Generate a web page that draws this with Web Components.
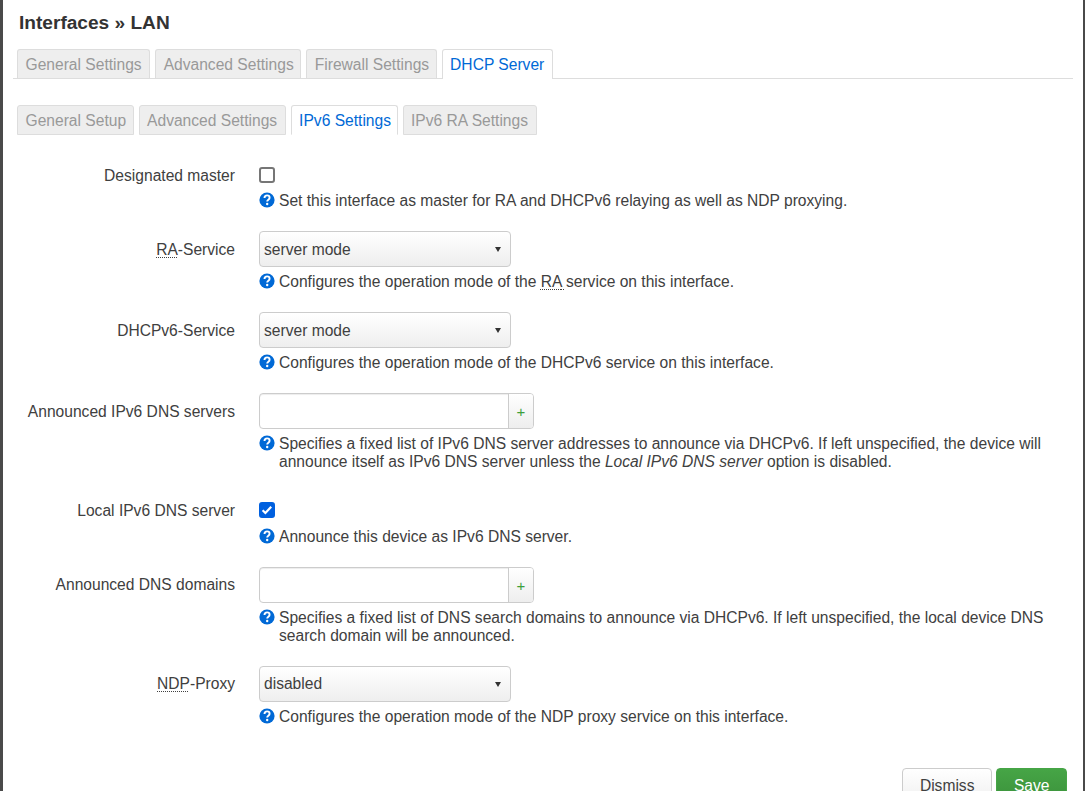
<!DOCTYPE html>
<html>
<head>
<meta charset="utf-8">
<style>
  html, body { margin: 0; height: 100%; overflow: hidden; background: #4a4a4a; }
  body { font-family: "Liberation Sans", Arial, sans-serif; }
</style>
</head>
<body>
<luci-modal>
  <h4 slot="title">Interfaces » LAN</h4>

  <luci-tabs slot="tabs" active="DHCP Server" tabs="General Settings|Advanced Settings|Firewall Settings|DHCP Server" line></luci-tabs>
  <luci-tabs slot="tabs" active="IPv6 Settings" tabs="General Setup|Advanced Settings|IPv6 Settings|IPv6 RA Settings" sub></luci-tabs>

  <luci-row label="Designated master" check style="--label-top: 2px">
    <luci-check style="margin-top: 1px"></luci-check>
    <span slot="desc">Set this interface as master for RA and DHCPv6 relaying as well as NDP proxying.</span>
  </luci-row>

  <luci-row label="RA-Service" abbr="RA">
    <luci-select value="server mode"></luci-select>
    <span slot="desc">Configures the operation mode of the <luci-abbr>RA</luci-abbr> service on this interface.</span>
  </luci-row>

  <luci-row label="DHCPv6-Service">
    <luci-select value="server mode"></luci-select>
    <span slot="desc">Configures the operation mode of the DHCPv6 service on this interface.</span>
  </luci-row>

  <luci-row label="Announced IPv6 DNS servers">
    <luci-list></luci-list>
    <span slot="desc">Specifies a fixed list of IPv6 DNS server addresses to announce via DHCPv6. If left unspecified, the device will announce itself as IPv6 DNS server unless the <em>Local IPv6 DNS server</em> option is disabled.</span>
  </luci-row>

  <luci-row label="Local IPv6 DNS server" check>
    <luci-check checked></luci-check>
    <span slot="desc">Announce this device as IPv6 DNS server.</span>
  </luci-row>

  <luci-row label="Announced DNS domains" style="--label-top: 0px">
    <luci-list></luci-list>
    <span slot="desc">Specifies a fixed list of DNS search domains to announce via DHCPv6. If left unspecified, the local device DNS search domain will be announced.</span>
  </luci-row>

  <luci-row label="NDP-Proxy" abbr="NDP" style="--label-top: 0px; --value-top: 0px">
    <luci-select value="disabled"></luci-select>
    <span slot="desc">Configures the operation mode of the NDP proxy service on this interface.</span>
  </luci-row>

  <luci-button slot="footer">Dismiss</luci-button>
  <luci-button slot="footer" save>Save</luci-button>
</luci-modal>

<script>
class LuciModal extends HTMLElement {
  constructor() {
    super();
    this.attachShadow({ mode: 'open' });
    this.shadowRoot.innerHTML = `
      <style>
        :host {
          display: block;
          margin: 0 2px 0 3px;
          height: 791px;
          overflow: hidden;
          background: #fff;
          color: #404040;
          font-size: 15.6px;
          padding: 11px 10px 0 10px;
          box-sizing: border-box;
        }
        ::slotted(h4) {
          margin: 0 0 15px 6px;
          font-size: 19.1px;
          line-height: 23px;
          font-weight: bold;
          color: #333;
        }
        .footer {
          display: flex;
          justify-content: flex-end;
          gap: 4px;
          margin-top: 43px;
          padding-right: 6px;
        }
      </style>
      <slot name="title"></slot>
      <slot name="tabs"></slot>
      <slot></slot>
      <div class="footer"><slot name="footer"></slot></div>
    `;
  }
}

class LuciTabs extends HTMLElement {
  constructor() {
    super();
    this.attachShadow({ mode: 'open' });
  }

  connectedCallback() {
    const active = this.getAttribute('active');
    const tabs = this.getAttribute('tabs').split('|');
    this.shadowRoot.innerHTML = `
      <style>
        :host { display: block; margin-bottom: 21px; }
        :host([line]) { margin-bottom: 26px; }
        ul {
          display: flex;
          gap: 5px;
          list-style: none;
          margin: 0;
          padding: 0 0 0 4px;
        }
        :host([line]) ul { border-bottom: 1px solid #ddd; }
        li {
          height: 28px;
          line-height: 29px;
          padding: 0 7.5px 0 7.5px;
          color: #999;
          background: #eee;
          border: 1px solid #ddd;
          border-bottom: 0;
          border-radius: 3px 3px 0 0;
          white-space: nowrap;
        }
        :host([line]) li { margin-bottom: -1px; }
        :host([line]) li:nth-child(2),
        :host([line]) li:nth-child(3),
        :host([sub]) li:first-child { padding-right: 6.5px; }
        :host([sub]) li:nth-child(3) { padding-right: 5.5px; }
        :host([sub]) li { border-bottom: 1px solid #ddd; height: 28px; }
        li.on { color: #0069d6; background: #fff; }
        :host([line]) li.on { padding-bottom: 1px; margin-bottom: -1px; }
        :host([sub]) li.on { border-bottom-color: #fff; }
      </style>
      <ul>${tabs.map(t => `<li class="${t === active ? 'on' : ''}">${t}</li>`).join('')}</ul>
    `;
  }
}

class LuciRow extends HTMLElement {
  constructor() {
    super();
    this.attachShadow({ mode: 'open' });
  }

  connectedCallback() {
    let label = this.getAttribute('label');
    const abbr = this.getAttribute('abbr');
    if (abbr) label = label.replace(abbr, `<u>${abbr}</u>`);
    this.shadowRoot.innerHTML = `
      <style>
        :host {
          display: grid;
          grid-template-columns: 222px 1fr;
          column-gap: 24px;
          margin-bottom: 22px;
        }
        .label {
          text-align: right;
          padding-top: var(--label-top, 1px);
          line-height: 36px;
          white-space: nowrap;
        }
        u {
          text-decoration: underline dotted 1px;
          text-underline-offset: 2px;
        }
        .control { height: 36px; }
        :host([check]) .control { height: 30px; padding-top: 10px; box-sizing: border-box; }
        .desc {
          display: flex;
          gap: 4px;
          margin: 5px 0 -1px;
          padding-top: 1px;
          line-height: 18px;
          max-width: 790px;
        }
        svg { flex: none; width: 16px; height: 16px; }
      </style>
      <div class="label">${label}</div>
      <div>
        <div class="control"><slot></slot></div>
        <div class="desc">
          <svg viewBox="0 0 16 16"><circle cx="8" cy="8" r="7.6" fill="#0069d6"/><path d="M5.5 6c0-1.6 1.1-2.6 2.6-2.6s2.5.9 2.5 2.3c0 1.9-2.4 2-2.4 3.7" fill="none" stroke="#fff" stroke-width="1.9"/><circle cx="8.2" cy="12" r="1.2" fill="#fff"/></svg>
          <div><slot name="desc"></slot></div>
        </div>
      </div>
    `;
  }
}

class LuciCheck extends HTMLElement {
  constructor() {
    super();
    this.attachShadow({ mode: 'open' });
  }

  connectedCallback() {
    this.shadowRoot.innerHTML = `
      <style>
        :host {
          display: block;
          width: 16px;
          height: 16px;
          box-sizing: border-box;
          border: 2px solid #767676;
          border-radius: 3px;
          background: #fff;
        }
        :host([checked]) { background: #0060df; border-color: #0060df; }
        svg { display: block; width: 12px; height: 12px; }
      </style>
      ${this.hasAttribute('checked') ? '<svg viewBox="0 0 12 12"><path d="M1.6 6.2l2.8 2.8 5.8-6.2" fill="none" stroke="#fff" stroke-width="2.2"/></svg>' : ''}
    `;
  }
}

class LuciSelect extends HTMLElement {
  constructor() {
    super();
    this.attachShadow({ mode: 'open' });
  }

  connectedCallback() {
    this.shadowRoot.innerHTML = `
      <style>
        :host {
          display: flex;
          align-items: center;
          justify-content: space-between;
          width: 252px;
          height: 36px;
          box-sizing: border-box;
          padding: 0 9px 0 4px;
          border: 1px solid #ccc;
          border-radius: 4px;
          background: linear-gradient(#fff, #eee);
        }
        span { padding-top: var(--value-top, 2px); }
        i {
          width: 0;
          height: 0;
          border-left: 3px solid transparent;
          border-right: 3px solid transparent;
          border-top: 5px solid #333;
        }
      </style>
      <span>${this.getAttribute('value')}</span><i></i>
    `;
  }
}

class LuciList extends HTMLElement {
  constructor() {
    super();
    this.attachShadow({ mode: 'open' });
    this.shadowRoot.innerHTML = `
      <style>
        :host {
          display: flex;
          width: 275px;
          height: 36px;
          box-sizing: border-box;
          border: 1px solid #ccc;
          border-radius: 4px;
          box-shadow: inset 0 1px 1px rgba(0,0,0,.075);
          background: #fff;
        }
        div { flex: 1; }
        button {
          width: 25px;
          padding: 0;
          border: 0;
          border-left: 1px solid #ccc;
          border-radius: 0 3px 3px 0;
          background: linear-gradient(#fff, #eee);
          color: #3c9f3c;
          font: 15px "Liberation Sans", Arial, sans-serif;
        }
      </style>
      <div></div><button>+</button>
    `;
  }
}

class LuciAbbr extends HTMLElement {
  constructor() {
    super();
    this.attachShadow({ mode: 'open' });
    this.shadowRoot.innerHTML = `
      <style>
        :host { text-decoration: underline dotted 1px; text-underline-offset: 2px; }
      </style>
      <slot></slot>
    `;
  }
}

class LuciButton extends HTMLElement {
  constructor() {
    super();
    this.attachShadow({ mode: 'open' });
    this.shadowRoot.innerHTML = `
      <style>
        :host {
          display: block;
          height: 36px;
          line-height: 34px;
          padding: 0 17px;
          border: 1px solid #ccc;
          border-radius: 4px;
          color: #404040;
          background: linear-gradient(#fff, #eee);
        }
        :host([save]) {
          padding: 0 16.5px;
          color: #fff;
          border-color: #46a546;
          background: linear-gradient(#46a546, #3a8f3a);
        }
      </style>
      <slot></slot>
    `;
  }
}

customElements.define('luci-modal', LuciModal);
customElements.define('luci-tabs', LuciTabs);
customElements.define('luci-row', LuciRow);
customElements.define('luci-check', LuciCheck);
customElements.define('luci-select', LuciSelect);
customElements.define('luci-list', LuciList);
customElements.define('luci-abbr', LuciAbbr);
customElements.define('luci-button', LuciButton);
</script>
</body>
</html>
